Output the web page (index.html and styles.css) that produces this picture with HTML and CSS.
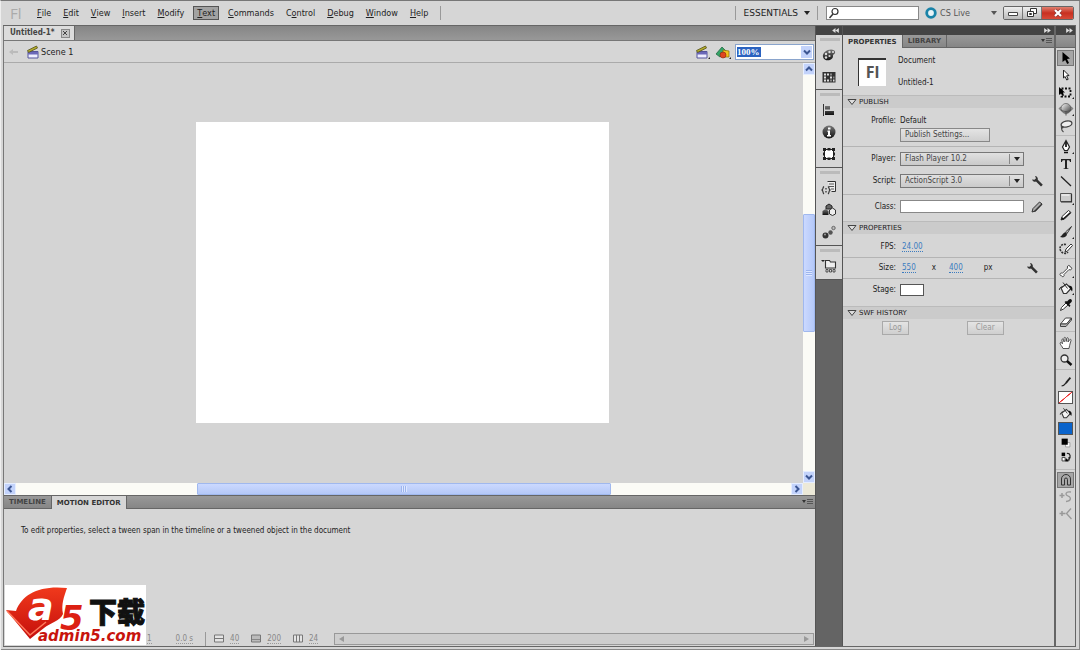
FILE: index.html
```html
<!DOCTYPE html>
<html lang="en">
<head>
<meta charset="utf-8">
<title>Untitled-1</title>
<link rel="stylesheet" href="styles.css">
</head>
<body>
<svg class="defs" aria-hidden="true">
  <defs>
    <linearGradient id="ball" x1="0" y1="0" x2="1" y2="1"><stop offset="0" stop-color="#fff"/><stop offset="1" stop-color="#333"/></linearGradient>
    <linearGradient id="dark" x1="0" y1="0" x2="0" y2="1"><stop offset="0" stop-color="#777"/><stop offset="1" stop-color="#111"/></linearGradient>
    <linearGradient id="red" x1="0" y1="0" x2="0" y2="1"><stop offset="0" stop-color="#f0391c"/><stop offset="1" stop-color="#c50f0c"/></linearGradient>
    <symbol id="clap" viewBox="0 0 16 16"><path d="M3 7.500h10v6.500H3z" fill="#eef" stroke="#55549c"/><path d="M3 8h10v2.500H3z" fill="#6b68b8"/><path d="M2.500 6.500l9-4.500 1 2-9 4.500z" fill="#b3ac2c" stroke="#56521a" stroke-width=".8"/></symbol>
    <symbol id="shapes" viewBox="0 0 16 16"><path d="M1 10l6-7 4 4-6 6z" fill="#35a568" stroke="#17603a" stroke-width=".7"/><path d="M8 6l6 1v6H8z" fill="#f2c21c" stroke="#8a6a08" stroke-width=".7"/><circle cx="8" cy="11" r="3" fill="#e0451f" stroke="#8c220c" stroke-width=".6"/></symbol>
    <symbol id="wrench" viewBox="0 0 16 16"><path d="M3 6.500a3 3 0 0 0 4 2l5 5 1.800-1.800-5-5A3 3 0 0 0 6 3l1 2.200-1.500 1.500z" fill="#333"/></symbol>
    <symbol id="pencil" viewBox="0 0 16 16"><path d="M3 13l1-3.500 6.500-6 2.500 2-6.500 6.500z" fill="#fff" stroke="#333"/><path d="M3 13l1-3 2 2z" fill="#111"/><path d="M5 12.200l7.500-6.700" stroke="#111" stroke-width="1.300"/></symbol>
    <symbol id="pencil2" viewBox="0 0 16 16"><path d="M3 13l1-3.500 6.500-6.500 2.500 2-6.500 7z" fill="#aaa" stroke="#333"/><path d="M5.500 12.500l7.500-7.500" stroke="#333" stroke-width="1.400"/></symbol>
    <symbol id="arrow" viewBox="0 0 16 16"><path d="M4.500 2l7.500 6.500-3 .5 2 4-1.800 1-2-4-2.700 2z" fill="#000"/></symbol>
    <symbol id="arrow2" viewBox="0 0 16 16"><path d="M5.500 3l5.500 5.500-2.400.3 1.600 3.500-1.500.7-1.600-3.500-1.600 1.500z" fill="#fff" stroke="#222"/></symbol>
    <symbol id="transform" viewBox="0 0 16 16"><path d="M3.500 4.500h9v8h-9z" fill="none" stroke="#111" stroke-width="1.800" stroke-dasharray="2 1.500"/><path d="M1 3l6 5.500H5l1 3-1.500.5-1-3L1 11z" fill="#000"/></symbol>
    <symbol id="rot3d" viewBox="0 0 16 16"><path d="M1 7.500c2-3 12-3 14 0-2 4-12 4-14 0z" fill="#999" stroke="#555" stroke-width=".6"/><circle cx="8" cy="7.500" r="5" fill="url(#ball)" stroke="#555" stroke-width=".7"/><path d="M3 9c3 2 7 2 10 0M8 11v3.500" stroke="#555" fill="none"/></symbol>
    <symbol id="lasso" viewBox="0 0 16 16"><ellipse cx="8.500" cy="6" rx="5.500" ry="3" fill="#eee" stroke="#444" stroke-width="1.300" transform="rotate(-12 8.500 6)"/><path d="M3.500 8c-1 2 2 2.500 1.500 1-2 0-2 3 .5 5" fill="none" stroke="#444" stroke-width="1.100"/></symbol>
    <symbol id="pen" viewBox="0 0 16 16"><path d="M8 1.500L4.500 8l2 3.500h3l2-3.500z" fill="#fff" stroke="#222" stroke-width="1.200"/><path d="M8 3v5M6 13.500h4" stroke="#111" stroke-width="1.700"/></symbol>
    <symbol id="text" viewBox="0 0 16 16"><path d="M3 3h10v3h-1c-.2-1.400-.6-1.800-2-1.800H9v7.300c0 .8.300 1 1.500 1V13h-5v-.5c1.200 0 1.500-.2 1.500-1V4.200H6c-1.400 0-1.800.4-2 1.800H3z" fill="#222"/></symbol>
    <symbol id="line" viewBox="0 0 16 16"><path d="M3 3.500l10 9.500" stroke="#222" stroke-width="1.300"/></symbol>
    <symbol id="rect" viewBox="0 0 16 16"><path d="M2.500 3.500h11v8h-11z" fill="#ccc" stroke="#555"/><path d="M13.500 4v8H3" stroke="#333" fill="none" stroke-width="1.200"/><path d="M3.500 5h8" stroke="#fff"/></symbol>
    <symbol id="brush" viewBox="0 0 16 16"><path d="M13.500 2.500L7.500 8l1.500 1.500z" fill="#ddd" stroke="#333"/><path d="M8 8.500c-3-.5-3 2.500-6 4.500 3.500 1 7 0 7-3z" fill="#222"/></symbol>
    <symbol id="deco" viewBox="0 0 16 16"><path d="M7 11l1-3 5-5 1.500 1.500-5 5.500z" fill="#fff" stroke="#333"/><path d="M8 3.500c-5-1-7 3-5.500 6S8 13.500 10 11" fill="none" stroke="#333" stroke-width="1.600" stroke-dasharray="2 1"/></symbol>
    <symbol id="bone" viewBox="0 0 16 16"><path d="M2 11.500c0-1.500 1.500-1.800 2.500-1.300l5-5C9 3.500 10 2 11.200 2.500c.8.300 1 1 1 1.500.8 0 1.800.6 1.500 1.700-.3 1.200-1.700 1.500-2.700.8l-5 5c.5 1.200-.3 2.300-1.300 2.200-.7 0-1-.6-1.200-1C2.600 12.700 2 12.200 2 11.500z" fill="#fff" stroke="#444"/></symbol>
    <symbol id="bucket" viewBox="0 0 16 16"><path d="M3 8l5.500-4 4.500 4.500-4.500 5H5.500z" fill="#f4f4f4" stroke="#333" stroke-width="1.200"/><path d="M5 2.500l4.500 6" stroke="#333"/><path d="M10.500 5.500c4 0 4.500 3 3.500 6l-2-3z" fill="#111"/><path d="M5 6.500C2 7 1 9 1.500 10" stroke="#333" fill="none"/></symbol>
    <symbol id="dropper" viewBox="0 0 16 16"><path d="M2.500 13.500l1-3 4.500-4.500 2 2L5.500 12z" fill="#fff" stroke="#333"/><path d="M6.500 5l5 5 1-1.500-1.300-1.300L13.500 5c1.500-2-1-4-2.500-2.500L9 4.500 8 4z" fill="#111"/></symbol>
    <symbol id="eraser" viewBox="0 0 16 16"><path d="M2.500 10l5-6h6l-5 6z" fill="#fff" stroke="#444"/><path d="M2.500 10v2.500H8L13.500 6V4L8.500 10z" fill="#bbb" stroke="#444"/></symbol>
    <symbol id="hand" viewBox="0 0 16 16"><path d="M5 13.500C4 11 2 9.500 2 8c.5-1.200 1.700-.3 2.500.7L3.800 5c0-1.300 1.400-1.300 1.700 0L6.200 7 6 3.300c0-1.300 1.600-1.300 1.800 0L8.200 6.500l.5-3c.2-1.200 1.700-1 1.600.2L10 7l1.500-2.200c.7-1 1.900-.3 1.500.8-.6 2-1 3-1.300 4.700-.2 1.500-.7 2-.7 3.200z" fill="#fff" stroke="#444" stroke-width=".9"/></symbol>
    <symbol id="zoomer" viewBox="0 0 16 16"><circle cx="6.500" cy="6.500" r="3.500" fill="#eee" stroke="#333" stroke-width="1.300"/><path d="M9 9l4.500 4" stroke="#111" stroke-width="2.400"/></symbol>
    <symbol id="stroke" viewBox="0 0 16 16"><path d="M3 12.500c3 0 4-2 6-4.500" stroke="#222" stroke-width="1.500" fill="none"/><path d="M8 9l5-6" stroke="#222" stroke-width="2"/></symbol>
    <symbol id="bw" viewBox="0 0 16 16"><path d="M7.500 7.500h5v5h-5z" fill="#fff" stroke="#999"/><path d="M3 3h7v7H3z" fill="#000"/></symbol>
    <symbol id="swap" viewBox="0 0 16 16"><path d="M3 3h4v4H3z" fill="#000"/><path d="M3.500 8.500h3.500v4H3.500z" fill="#fff" stroke="#333"/><path d="M9 4c4-.5 5 4 2 7M8.500 11.500h3M11.500 8v4" fill="none" stroke="#222" stroke-width="1.400"/><path d="M8 9l3 4H7z"/></symbol>
    <symbol id="magnet" viewBox="0 0 16 16"><path d="M3.500 13V7a4.500 4.500 0 0 1 9 0v6h-3V7.500a1.500 1.500 0 0 0-3 0V13z" fill="#aaa" stroke="#333"/></symbol>
    <symbol id="smooth" viewBox="0 0 16 16"><path d="M1.500 6.500h5M4 4v5" stroke="#999" stroke-width="1.500"/><path d="M13 3c-6-1-6 3-3 4s4 5-2 5.500" stroke="#999" stroke-width="1.300" fill="none"/></symbol>
    <symbol id="straight" viewBox="0 0 16 16"><path d="M1.500 7.500h6M4 5v5" stroke="#999" stroke-width="1.500"/><path d="M13 2.500L8.500 7.500l5 5.500" stroke="#999" stroke-width="1.300" fill="none"/></symbol>
    <symbol id="palette" viewBox="0 0 16 16"><path d="M2 10C1 6 6 2.500 10 2.500c5 0 5 4 2.500 5-1 .5 0 2-1 3.500C9 14.500 3 14 2 10z" fill="url(#dark)"/><circle cx="5" cy="7" r="1.200" fill="#ddd"/><circle cx="8.500" cy="5" r="1.200" fill="#ddd"/><circle cx="12" cy="5" r="1.100" fill="#ddd"/><circle cx="5" cy="10.500" r="1.200" fill="#ddd"/><circle cx="8.500" cy="9" r="1.100" fill="#ddd"/></symbol>
    <symbol id="swatches" viewBox="0 0 16 16"><path d="M1.500 3h13v10.500h-13z" fill="#333"/><g fill="#ddd"><path d="M3 4.500h2v2H3zM6 4.500h2v2H6zM3 7.500h2v2H3zM9 7.500h2v2H9zM3 10.500h2v2H3zM6 10.500h2v2H6zM12 10.500h1.500v2H12z"/></g><path d="M9 4.500h2v2H9zM12 7.500h1.500v2H12zM9 10.500h2v2H9z" fill="#888"/></symbol>
    <symbol id="align" viewBox="0 0 16 16"><path d="M2.500 2v12" stroke="#333"/><path d="M4 4h5v3.500H4zM4 9h9v4H4z" fill="url(#dark)"/></symbol>
    <symbol id="info" viewBox="0 0 16 16"><circle cx="8" cy="8" r="6.500" fill="url(#dark)"/><path d="M7 3.500h2.500v2H7zM6.500 6.500H9V11h1v1.500H6V11h1V8h-.5z" fill="#fff"/></symbol>
    <symbol id="xform" viewBox="0 0 16 16"><path d="M3.500 3.500h9v9h-9z" fill="#fff" stroke="#222"/><g fill="#222"><path d="M2 2h3v3H2zM6.500 2h3v2.500h-3zM11 2h3v3h-3zM2 11h3v3H2zM6.500 11.500h3V14h-3zM11 11h3v3h-3zM2 6.500h2v3H2zM12 6.500h2v3h-2z"/></g></symbol>
    <symbol id="snip" viewBox="0 0 16 16"><path d="M6.500 1.500h8v10h-4" fill="#eee" stroke="#333"/><path d="M8 4h5M8 6.500h5M10 9h3" stroke="#555"/><path d="M3 6.500c-1.500 1-.5 2.500-2 3.500 1.500 1 .5 3 2 4M7 6.500c1.500 1 .5 2.500 2 3.500-1.500 1-.5 3-2 4" stroke="#333" fill="none" stroke-width="1.200"/><path d="M5 8v1.500M5 11v1.500" stroke="#333" stroke-width="1.300"/></symbol>
    <symbol id="cubes" viewBox="0 0 16 16"><path d="M5 4l3-2 3 2v3H5z" fill="#666" stroke="#222"/><path d="M1.500 9l3-2 3 2v4h-6z" fill="url(#dark)"/><path d="M8.500 8l3-2 3 2v4l-3 1.500-3-1.500z" fill="#eee" stroke="#333"/></symbol>
    <symbol id="balls" viewBox="0 0 16 16"><circle cx="4.500" cy="11.500" r="3" fill="#333"/><circle cx="9.500" cy="8.500" r="2.200" fill="#555"/><circle cx="12.500" cy="4" r="1.700" fill="#bbb" stroke="#666"/><circle cx="4" cy="10.500" r=".9" fill="#aaa"/></symbol>
    <symbol id="folder" viewBox="0 0 16 16"><path d="M0 2h4L2 4z" fill="#222"/><path d="M4.500 10V2.500h4l1 1.500h5V10z" fill="#eee" stroke="#333" stroke-width="1.100"/><path d="M5 11.500h2v2.500H5zM8.500 11.500h2v2.500h-2zM12 11.500h2v2.500h-2z" fill="#ddd" stroke="#333" stroke-width=".8"/></symbol>
    <symbol id="flyout" viewBox="0 0 12 8"><path d="M0 2h4L2 5z" fill="#333"/><path d="M5 1.500h6M5 3.500h6M5 5.500h6" stroke="#555"/></symbol>
    <symbol id="collapse" viewBox="0 0 8 6"><path d="M4 0v6L0 3zM8 0v6L4 3z" fill="#ddd"/></symbol>
    <symbol id="expand" viewBox="0 0 8 6"><path d="M0 0v6l4-3zM4 0v6l4-3z" fill="#ddd"/></symbol>
    <symbol id="twirl" viewBox="0 0 10 8"><path d="M1 1.500h8L5 6.500z" fill="#ddd" stroke="#444"/></symbol>
    <symbol id="chev" viewBox="0 0 10 10"><path d="M2 3.500l3 3 3-3" fill="none" stroke="#3c5692" stroke-width="2"/></symbol>
    <symbol id="caret" viewBox="0 0 6 4"><path d="M0 0h6L3 4z" fill="currentColor"/></symbol>
  </defs>
</svg>

<div class="app">
  <header class="menubar">
    <span class="mark">Fl</span>
    <nav class="menus">
      <button><u>F</u>ile</button><button><u>E</u>dit</button><button><u>V</u>iew</button><button><u>I</u>nsert</button><button><u>M</u>odify</button><button class="on"><u>T</u>ext</button><button><u>C</u>ommands</button><button>C<u>o</u>ntrol</button><button><u>D</u>ebug</button><button><u>W</u>indow</button><button><u>H</u>elp</button>
    </nav>
    <i class="vrule"></i>
    <span class="spacer"></span>
    <i class="vrule"></i>
    <button class="workspace">ESSENTIALS <svg class="caret"><use href="#caret"/></svg></button>
    <i class="vrule"></i>
    <label class="search"><svg viewBox="0 0 12 12"><circle cx="7" cy="4.500" r="3" fill="none" stroke="#333" stroke-width="1.200"/><path d="M5 7l-3.500 4" stroke="#333" stroke-width="1.500"/></svg><input type="text" aria-label="Search"></label>
    <button class="live"><svg class="ring" viewBox="0 0 12 12"><circle cx="6" cy="6" r="4.300" fill="#e8f4f8" stroke="#1a83a8" stroke-width="2.800"/></svg><span>CS Live</span><svg class="caret"><use href="#caret"/></svg></button>
    <div class="winbtns">
      <button aria-label="Minimize"><svg viewBox="0 0 14 12"><path d="M2.500 5.500h9v3h-9z" fill="#fff" stroke="#444"/></svg></button>
      <button aria-label="Restore"><svg viewBox="0 0 14 12"><path d="M5.500 1.500h6v5h-6z" fill="#fff" stroke="#333"/><path d="M2.500 4.500h6v5h-6z" fill="#fff" stroke="#333"/><path d="M4.500 6.500h2v1h-2z" stroke="#333" fill="none"/></svg></button>
      <button class="close" aria-label="Close"><svg viewBox="0 0 14 12"><path d="M4 3l6 6M10 3L4 9" stroke="#833" stroke-width="3.400"/><path d="M4 3l6 6M10 3L4 9" stroke="#fff" stroke-width="2.200"/></svg></button>
    </div>
  </header>

  <div class="work">
    <main class="doc">
      <div class="doctabs"><div class="doctab">Untitled-1* <button aria-label="Close tab"><svg viewBox="0 0 8 8"><path d="M2 2l4 4M6 2L2 6" stroke="#444"/></svg></button></div></div>
      <div class="editbar">
        <svg class="back" viewBox="0 0 10 8"><path d="M0 4l4-3v2h5v2H4v2z" fill="#bbb"/></svg>
        <svg class="ico"><use href="#clap"/></svg>
        <span class="scene">Scene 1</span>
        <span class="spacer"></span>
        <button class="tri" aria-label="Edit scene"><svg class="ico"><use href="#clap"/></svg></button>
        <button class="tri" aria-label="Edit symbols"><svg class="ico"><use href="#shapes"/></svg></button>
        <div class="zoombox"><input type="text" value="100%" aria-label="Zoom"><button aria-label="Zoom levels"><svg><use href="#chev"/></svg></button></div>
      </div>
      <div class="canvas">
        <div class="paste"><div class="stage"></div></div>
        <div class="vscroll"><button aria-label="Scroll up"><svg class="up"><use href="#chev"/></svg></button><div class="vtrack"><i class="vthumb"></i></div><button aria-label="Scroll down"><svg><use href="#chev"/></svg></button></div>
      </div>
      <div class="hscroll"><button aria-label="Scroll left"><svg class="left"><use href="#chev"/></svg></button><div class="htrack"><i class="hthumb"></i></div><button aria-label="Scroll right"><svg class="right"><use href="#chev"/></svg></button><i class="corner"></i></div>
      <section class="timeline">
        <div class="tabs"><button>TIMELINE</button><button class="on">MOTION EDITOR</button><svg class="fly"><use href="#flyout"/></svg></div>
        <p class="hint">To edit properties, select a tween span in the timeline or a tweened object in the document</p>
        <div class="foot">
          <span class="num first">1</span><span class="num">0.0 s</span><i class="vrule"></i>
          <svg viewBox="0 0 10 9"><path d="M.5 1h9v7h-9zM.5 4.500h9" fill="#e4e4e4" stroke="#777"/></svg><span class="num">40</span>
          <svg viewBox="0 0 10 9"><path d="M.5 1h9v7h-9z" fill="#bbb" stroke="#777"/><path d="M1 5.500h8" stroke="#888"/></svg><span class="num">200</span>
          <svg viewBox="0 0 10 9"><path d="M.5 1h9v7h-9zM3.500 1v7M6.500 1v7" fill="#e4e4e4" stroke="#777"/></svg><span class="num">24</span>
          <div class="fscroll"><svg viewBox="0 0 5 6"><path d="M5 0v6L0 3z" fill="#999"/></svg><svg viewBox="0 0 5 6"><path d="M0 0v6l5-3z" fill="#999"/></svg></div>
        </div>
      </section>
    </main>

    <aside class="dock">
      <div class="strip"><svg><use href="#collapse"/></svg></div>
      <div class="dgroup"><button aria-label="Color"><svg class="ico"><use href="#palette"/></svg></button><button aria-label="Swatches"><svg class="ico"><use href="#swatches"/></svg></button></div>
      <div class="dgroup"><button aria-label="Align"><svg class="ico"><use href="#align"/></svg></button><button aria-label="Info"><svg class="ico"><use href="#info"/></svg></button><button aria-label="Transform"><svg class="ico"><use href="#xform"/></svg></button></div>
      <div class="dgroup"><button aria-label="Code snippets"><svg class="ico"><use href="#snip"/></svg></button><button aria-label="Components"><svg class="ico"><use href="#cubes"/></svg></button><button aria-label="Motion presets"><svg class="ico"><use href="#balls"/></svg></button></div>
      <div class="dgroup"><button aria-label="Project"><svg class="ico"><use href="#folder"/></svg></button></div>
    </aside>

    <aside class="panel">
      <div class="strip"><svg><use href="#expand"/></svg></div>
      <div class="tabs"><button class="on">PROPERTIES</button><button>LIBRARY</button><svg class="fly"><use href="#flyout"/></svg></div>
      <div class="info"><div class="fl">Fl</div><div class="names"><span>Document</span><span>Untitled-1</span></div></div>
      <h2><svg><use href="#twirl"/></svg>PUBLISH</h2>
      <div class="block profile">
        <div class="row"><span class="lab">Profile:</span><span>Default</span></div>
        <div class="row"><span class="lab"></span><button class="btn wide">Publish Settings...</button></div>
      </div>
      <div class="block sel">
        <div class="row"><label class="lab" for="player">Player:</label><span class="select"><select id="player"><option>Flash Player 10.2</option></select><svg class="caret"><use href="#caret"/></svg></span></div>
        <div class="row"><label class="lab" for="script">Script:</label><span class="select"><select id="script"><option>ActionScript 3.0</option></select><svg class="caret"><use href="#caret"/></svg></span><button class="tool" aria-label="ActionScript settings"><svg class="ico"><use href="#wrench"/></svg></button></div>
      </div>
      <div class="block cls">
        <div class="row"><label class="lab" for="cls">Class:</label><input id="cls" type="text"><button class="tool" aria-label="Edit class"><svg class="ico"><use href="#pencil2"/></svg></button></div>
      </div>
      <h2><svg><use href="#twirl"/></svg>PROPERTIES</h2>
      <div class="block fps"><div class="row one"><span class="lab">FPS:</span><a href="#fps">24.00</a></div></div>
      <div class="block"><div class="row one size"><span class="lab">Size:</span><a href="#w">550</a><span class="x">x</span><a href="#h">400</a><span class="px">px</span><button class="tool" aria-label="Document settings"><svg class="ico"><use href="#wrench"/></svg></button></div></div>
      <div class="block stagecol"><div class="row one"><span class="lab">Stage:</span><button class="swatch" aria-label="Stage color"></button></div></div>
      <h2><svg><use href="#twirl"/></svg>SWF HISTORY</h2>
      <div class="history"><button class="btn" disabled>Log</button><button class="btn clear" disabled>Clear</button></div>
    </aside>

    <aside class="tools">
      <div class="strip"><svg><use href="#expand"/></svg></div>
      <div class="cap"></div>
      <div class="tgroup">
        <button class="on" aria-label="Selection"><svg class="ico"><use href="#arrow"/></svg></button><button aria-label="Subselection"><svg class="ico"><use href="#arrow2"/></svg></button><button class="tri" aria-label="Free transform"><svg class="ico"><use href="#transform"/></svg></button><button class="tri" aria-label="3D rotation"><svg class="ico"><use href="#rot3d"/></svg></button><button aria-label="Lasso"><svg class="ico"><use href="#lasso"/></svg></button>
      </div>
      <div class="tgroup">
        <button class="tri" aria-label="Pen"><svg class="ico"><use href="#pen"/></svg></button><button aria-label="Text"><svg class="ico"><use href="#text"/></svg></button><button aria-label="Line"><svg class="ico"><use href="#line"/></svg></button><button class="tri" aria-label="Rectangle"><svg class="ico"><use href="#rect"/></svg></button><button aria-label="Pencil"><svg class="ico"><use href="#pencil"/></svg></button><button class="tri" aria-label="Brush"><svg class="ico"><use href="#brush"/></svg></button><button aria-label="Deco"><svg class="ico"><use href="#deco"/></svg></button>
      </div>
      <div class="tgroup">
        <button class="tri" aria-label="Bone"><svg class="ico"><use href="#bone"/></svg></button><button class="tri" aria-label="Paint bucket"><svg class="ico"><use href="#bucket"/></svg></button><button aria-label="Eyedropper"><svg class="ico"><use href="#dropper"/></svg></button><button aria-label="Eraser"><svg class="ico"><use href="#eraser"/></svg></button>
      </div>
      <div class="tgroup"><button aria-label="Hand"><svg class="ico"><use href="#hand"/></svg></button><button aria-label="Zoom"><svg class="ico"><use href="#zoomer"/></svg></button></div>
      <div class="tgroup colors">
        <svg class="small"><use href="#stroke"/></svg><button class="chip none" aria-label="Stroke color"></button><svg class="small"><use href="#bucket"/></svg><button class="chip fill" aria-label="Fill color"></button>
        <button class="mini" aria-label="Black and white"><svg class="small"><use href="#bw"/></svg></button><button class="mini" aria-label="Swap colors"><svg class="small"><use href="#swap"/></svg></button>
      </div>
      <div class="tgroup opts"><button class="on" aria-label="Snap to objects"><svg class="ico"><use href="#magnet"/></svg></button><button aria-label="Smooth"><svg class="ico"><use href="#smooth"/></svg></button><button aria-label="Straighten"><svg class="ico"><use href="#straight"/></svg></button></div>
    </aside>
  </div>

  <div class="badge">
    <svg viewBox="0 0 141 60" role="img" aria-label="a5 admin5.com">
      <path d="M1 25l10 1C17 9 35 0 62 3c-3 9-6 16-4 26-3 7-13 9-19 14L25 54z" fill="url(#red)"/>
      <path d="M2 26l23 24 16-13" fill="none" stroke="#ff7a5c" stroke-width="1.500"/>
      <text x="23" y="35" class="logo-a">a</text>
      <text x="55" y="45" class="logo-5">5</text>
      <text x="84" y="38" class="logo-cn">下载</text>
      <text x="33" y="56" class="logo-url">admin5.com</text>
    </svg>
  </div>
</div>
</body>
</html>
```
FILE: styles.css
```css
* { box-sizing: border-box; }
body { margin: 0; font: 8px/12px "DejaVu Sans Condensed", "DejaVu Sans", sans-serif; color: #222; background: #d6d6d6; }
button, input, select { font: inherit; color: inherit; margin: 0; padding: 0; border: 0; background: none; border-radius: 0; }
button { display: flex; align-items: center; justify-content: center; flex: none; }
svg { display: block; flex: none; }
.defs { position: absolute; width: 0; height: 0; }
.ico { width: 16px; height: 16px; }
.small { width: 14px; height: 14px; }
.caret { width: 6px; height: 4px; }
.spacer { flex: 1; }
.vrule { width: 1px; height: 14px; background: #999; flex: none; }
.app { position: relative; display: flex; flex-direction: column; height: 100vh; padding: 0 4px 3px 2px; border-top: 1px solid #777; border-left: 1px solid #eee; box-shadow: inset 0 -1px #888, inset -1px 0 #888; }

.menubar { display: flex; align-items: center; height: 24px; padding-right: 2px; font-size: 9px; flex: none; }
.mark { width: 28px; padding-left: 7px; font: 15px "Open Sans", sans-serif; color: #aaa; }
.menus { display: flex; }
.menus button { height: 14px; padding: 0 5px; border: 1px solid transparent; }
.menus .on { padding: 0 3px; margin: 0 3px; background: #a2a2a2; border-color: #555; }
.menus + .vrule { margin-left: 6px; }
.workspace { gap: 6px; padding: 0 7px 0 8px; font-family: "DejaVu Sans", sans-serif; }
.search { display: flex; align-items: center; width: 93px; height: 14px; margin: 0 6px 0 8px; background: #fff; border: 1px solid #888; }
.search svg { width: 12px; height: 12px; margin-left: 1px; }
.search input { flex: 1; min-width: 0; }
.live { gap: 3px; margin-right: 6px; color: #555; }
.live .caret { margin-left: 18px; }
.ring { width: 12px; height: 12px; }
.winbtns { display: flex; height: 14px; border: 1px solid #666; border-radius: 2px; overflow: hidden; }
.winbtns button { width: 19px; background: linear-gradient(#eee, #bbb); border-right: 1px solid #777; }
.winbtns svg { width: 14px; height: 12px; }
.winbtns .close { width: 31px; border: 0; background: linear-gradient(#e08070, #c83020 50%, #d64a38); }

.work { display: flex; flex: 1; min-height: 0; background: #646464; border: 1px solid #666; border-width: 1px 1px 1px 0; }
.doc { display: flex; flex-direction: column; flex: 1; min-width: 0; background: #d6d6d6; border-left: 1px solid #777; }
.doctabs { display: flex; height: 15px; background: linear-gradient(#868686, #989898); border-bottom: 1px solid #777; flex: none; }
.doctab { display: flex; align-items: center; gap: 6px; padding: 0 4px 0 6px; background: #dcdcdc; border-right: 1px solid #666; font-weight: bold; color: #444; }
.doctab button { width: 9px; height: 9px; background: #c4c4c4; border: 1px solid #888; }
.doctab svg { width: 8px; height: 8px; }
.editbar { display: flex; align-items: center; height: 22px; padding: 0 1px 0 5px; border-bottom: 1px solid #aaa; font-size: 9px; flex: none; }
.back { width: 10px; height: 8px; margin-right: 6px; }
.tri { position: relative; }
.tri::after { content: ""; position: absolute; right: 0; bottom: 1px; border: 1px solid #222; border-left-color: transparent; border-top-color: transparent; }
.editbar .tri { width: 17px; margin-right: 4px; }
.zoombox { display: flex; align-items: center; width: 79px; height: 16px; padding: 1px; background: #fff; border: 1px solid #8aa4cc; }
.zoombox input { width: 24px; height: 10px; background: #2a62c0; color: #fff; font: bold 9px/10px "Liberation Serif", serif; }
.zoombox button { width: 11px; height: 12px; margin-left: auto; background: #c3d3fb; }
.zoombox svg, .vscroll svg, .hscroll svg { width: 10px; height: 10px; }

.canvas { display: flex; flex: 1; min-height: 0; }
.paste { flex: 1; min-width: 0; padding: 59px 194px 60px 192px; background: #d4d4d4; }
.stage { height: 100%; background: #fff; }
.vscroll { display: flex; flex-direction: column; width: 12px; background: #fbfbf6; }
.vscroll button, .hscroll button { width: 12px; height: 12px; background: #c3d3fb; border: 1px solid #e6eeff; }
.vtrack { flex: 1; display: grid; grid-template-rows: 139fr 118fr 139fr; }
.vthumb { grid-row: 2; background: repeating-linear-gradient(#9db5ee 0 1px, #dde7ff 1px 2px) center / 6px 6px no-repeat, linear-gradient(90deg, #cbd9ff, #b4c8f8); border: 1px solid #a0b8ee; border-radius: 1px; }
.up { transform: rotate(180deg); } .left { transform: rotate(90deg); } .right { transform: rotate(-90deg); }
.hscroll { display: flex; height: 12px; background: #fbfbf6; flex: none; }
.htrack { flex: 1; display: grid; grid-template-columns: 181fr 414fr 180fr; }
.hthumb { grid-column: 2; background: repeating-linear-gradient(90deg, #9db5ee 0 1px, #dde7ff 1px 2px) center / 6px 6px no-repeat, linear-gradient(#cbd9ff, #b4c8f8); border: 1px solid #a0b8ee; border-radius: 1px; }
.corner { width: 12px; background: #ece9d8; }

.tabs { display: flex; align-items: stretch; height: 13px; background: linear-gradient(#999, #868686); border-bottom: 1px solid #666; font: bold 7px/12px "DejaVu Sans", sans-serif; flex: none; }
.tabs button { padding: 0 5px; border-right: 1px solid #666; color: #444; font-weight: bold; }
.tabs .on { background: #d6d6d6; margin-bottom: -1px; color: #333; }
.fly { width: 12px; height: 8px; margin: 2px 1px 0 auto; }
.timeline { display: flex; flex-direction: column; height: 151px; border-top: 1px solid #666; flex: none; }
.hint { margin: 16px 17px auto; }
.foot { display: flex; align-items: center; height: 13px; margin: 0 1px 1px 142px; color: #888; }
.foot svg { width: 10px; height: 9px; margin-right: 6px; }
.num { border-bottom: 1px dotted #999; line-height: 9px; margin-right: 12px; }
.num.first { margin: 0 24px 0 1px; }
.foot .vrule { margin-right: 8px; }
.fscroll { flex: 1; display: flex; align-items: center; justify-content: space-between; height: 12px; margin-left: 4px; padding: 0 4px; background: #cecece; border: 1px solid #999; }
.fscroll svg { width: 5px; height: 6px; margin: 0; }

.strip { display: flex; align-items: center; height: 9px; background: #444; flex: none; }
.strip svg { width: 7px; height: 5px; margin: 0 3px 0 auto; }
.dock { width: 28px; border: 1px solid #555; border-width: 0 1px; flex: none; }
.dgroup { display: flex; flex-direction: column; align-items: center; padding: 9px 0 1px; background: linear-gradient(#bbb, #bbb) 4px 3px / 20px 3px no-repeat #d6d6d6; border-bottom: 1px solid #555; }
.dgroup button { height: 22px; width: 22px; }
.dgroup:nth-of-type(n+3) { padding-bottom: 2px; }

.panel { display: flex; flex-direction: column; width: 211px; background: #d6d6d6; flex: none; }
.info { display: flex; height: 47px; padding: 10px 0 0 15px; gap: 12px; flex: none; }
.fl { width: 28px; height: 28px; background: #fff; border: 1px solid #333; border-width: 2px 0 0 1px; font: bold 16px/25px "Open Sans", sans-serif; text-align: center; color: #555; }
.names { display: flex; flex-direction: column; gap: 10px; margin-top: -3px; }
.panel h2 { display: flex; align-items: center; gap: 2px; height: 13px; margin: 0; padding-left: 4px; background: #cbcbcb; border-top: 1px solid #bbb; font: 7px/12px "DejaVu Sans", sans-serif; color: #222; flex: none; }
.panel h2 svg { width: 10px; height: 8px; }
.block { border-bottom: 1px solid #b4b4b4; }
.block.cls, .block.stagecol { border: 0; }
.row { display: flex; align-items: center; gap: 4px; }
.lab { width: 53px; text-align: right; flex: none; }
.profile { padding: 7px 0 4px; }
.btn { height: 14px; padding: 0 8px; border: 1px solid #888; background: linear-gradient(#e4e4e4, #cfcfcf); color: #444; }
.btn.wide { width: 90px; padding: 0 4px; justify-content: flex-start; }
.profile .row + .row { height: 15px; }
.sel { padding: 1px 0 2px; }
.sel .row { height: 22px; }
.select { position: relative; width: 124px; height: 14px; border: 1px solid #777; background: linear-gradient(#e0e0e0, #cacaca); }
.select select { appearance: none; width: 100%; height: 12px; padding: 0 4px; line-height: 12px; color: #444; display: block; }
.select .caret { position: absolute; right: 3px; top: 4px; pointer-events: none; }
.select::after { content: ""; position: absolute; right: 13px; top: 1px; bottom: 1px; width: 1px; background: #888; }
.tool { width: 18px; height: 16px; }
.cls { padding: 5px 0 8px; }
.cls input { width: 124px; height: 13px; background: #fff; border: 1px solid #888; }
.cls .row { height: 13px; }
.fps { padding-top: 3px; }
.row.one { height: 20px; }
.row a { color: #3c7cc0; text-decoration: none; border-bottom: 1px dotted #3c7cc0; line-height: 9px; margin-left: 2px; }
.size .x { margin: 0 7px 0 12px; } .size .px { margin: 0 26px 0 17px; }
.swatch { width: 24px; height: 12px; background: #fff; border: 1px solid #555; }
.stagecol { padding: 1px 0 6px; }
.history { display: flex; padding: 2px 0 0 39px; gap: 58px; }
.history .btn { padding: 0 6px; color: #999; border-color: #aaa; }
.history .clear { padding: 0 8px; }

.tools { width: 21px; background: #d6d6d6; border-left: 2px solid #666; flex: none; }
.tools .strip svg { margin-right: 2px; }
.cap { height: 13px; background: linear-gradient(#999, #868686); border-bottom: 1px solid #666; }
.tgroup { display: flex; flex-direction: column; align-items: center; padding: 2px 0 1px; border-bottom: 1px solid #bbb; }
.tgroup button { width: 17px; height: 17px; }
.tgroup .on { background: #a6a6a6; border: 1px solid #777; width: 17px; height: 16px; }
.tgroup:nth-of-type(5) { padding-top: 3px; }
.colors { padding: 5px 0 6px; gap: 2px; }
.tgroup .chip { width: 15px; height: 13px; border: 1px solid #555; }
.none { background: linear-gradient(to bottom right, #fff 46%, #e33 48% 52%, #fff 54%); }
.fill { background: #0a64cc; }
.tgroup .mini { height: 12px; }
.opts { border: 0; }

.badge { position: absolute; left: 4px; bottom: 5px; width: 141px; height: 60px; background: #fff; overflow: hidden; }
.badge svg { width: 141px; height: 60px; }
.logo-a { font: italic bold 38px "DejaVu Sans", sans-serif; fill: #fff; }
.logo-5 { font: italic bold 34px "DejaVu Sans", sans-serif; fill: #dc2012; }
.logo-cn { font: 900 28px "Noto Sans CJK SC", sans-serif; fill: #111; stroke: #111; stroke-width: 1px; }
.logo-url { font: italic bold 15px "DejaVu Sans", sans-serif; fill: #c8140d; }
```
